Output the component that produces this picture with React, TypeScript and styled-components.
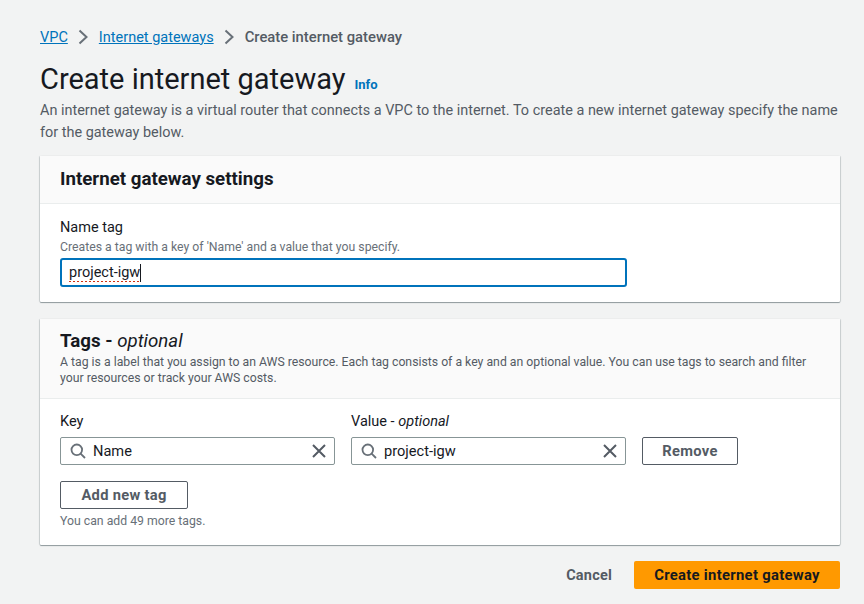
import React from 'react';
import styled, { createGlobalStyle } from 'styled-components';

const GlobalStyle = createGlobalStyle`
  html, body {
    margin: 0;
    padding: 0;
    background: #f2f3f3;
    font-family: Roboto, "Noto Sans", "Liberation Sans", sans-serif;
    color: #16191f;
  }
`;

const Page = styled.div`
  width: 864px;
  height: 604px;
  box-sizing: border-box;
  padding: 27px 24px 0 40px;
  overflow: hidden;
`;

const Breadcrumbs = styled.nav`
  display: flex;
  align-items: center;
  height: 20px;
  font-size: 14.5px;
`;

const Crumb = styled.a`
  color: #0073bb;
  text-decoration: underline;
`;

const CurrentCrumb = styled.span`
  color: #545b64;
  font-size: 14.8px;
  font-weight: 500;
`;

const Chevron = styled.svg`
  width: 12px;
  height: 16px;
  margin: 0 9.5px;
  fill: none;
  stroke: #687078;
  stroke-width: 2;
`;

const TitleRow = styled.div`
  display: flex;
  align-items: baseline;
  margin-top: 11px;
  height: 42px;
`;

const Title = styled.h1`
  margin: 0;
  font-size: 29px;
  line-height: 42px;
  font-weight: 400;
`;

const InfoLink = styled.a`
  margin-left: 9px;
  font-size: 13px;
  font-weight: 700;
  color: #0073bb;
`;

const Intro = styled.p`
  margin: 0;
  font-size: 14.45px;
  line-height: 22px;
  white-space: nowrap;
  color: #545b64;
`;

const Card = styled.section`
  margin-top: ${(p: { $top: number }) => p.$top}px;
  background: #fff;
  box-shadow: 0 1px 1px 0 rgba(0, 28, 36, 0.4), 1px 0 1px 0 rgba(0, 28, 36, 0.14), -1px 0 1px 0 rgba(0, 28, 36, 0.14);
  border-radius: 1px;
`;

const CardHeader = styled.header<{ $height: number; $top: number }>`
  box-sizing: border-box;
  height: ${(p) => p.$height}px;
  padding: ${(p) => p.$top}px 20px 0;
  background: #fafafa;
  border-bottom: 1px solid #eaeded;
`;

const CardTitle = styled.h2`
  margin: 0;
  font-size: 18.7px;
  line-height: 26px;
  font-weight: 700;

  em {
    font-weight: 400;
  }
`;

const Hint = styled.p`
  margin: 0;
  font-size: 12.25px;
  line-height: 16px;
  white-space: nowrap;
  color: #687078;
`;

const HeaderHint = styled(Hint)`
  color: #545b64;
`;

const CardBody = styled.div<{ $padding: string }>`
  padding: ${(p) => p.$padding};
`;

const Label = styled.div`
  font-size: 14.5px;
  line-height: 20px;
  color: #16191f;
`;

const NameHint = styled(Hint)`
  margin-top: 1px;
`;

const NameInput = styled.div`
  box-sizing: border-box;
  width: 567px;
  height: 29px;
  margin-top: 3px;
  padding-left: 7px;
  border: 2px solid #0073bb;
  border-radius: 3px;
  background: #fff;
  font-size: 14.5px;
  line-height: 25px;
`;

const Misspelled = styled.span`
  padding-bottom: 1px;
  background: repeating-linear-gradient(90deg, #d13212 0 2px, transparent 2px 4px) bottom / 100% 1px no-repeat;
  border-right: 1px solid #16191f;
`;

const TagRow = styled.div`
  display: flex;
  align-items: flex-end;
  gap: 16px;
`;

const TagColumn = styled.div`
  width: 275px;
`;

const SearchField = styled.div`
  box-sizing: border-box;
  display: flex;
  align-items: center;
  height: 28px;
  margin-top: 5px;
  padding: 0 7px 0 9px;
  border: 1px solid #879596;
  border-radius: 2px;
  background: #fff;
  font-size: 14.6px;
  color: #16191f;

  span {
    flex: 1;
    margin-left: 7px;
  }
`;

const FieldIcon = styled.svg`
  width: 16px;
  height: 16px;
  fill: none;
  stroke: ${(p: { $color: string }) => p.$color};
  stroke-width: 1.8;
`;

const ClearIcon = styled(FieldIcon)`
  stroke-width: 2;
`;

const OutlineButton = styled.button<{ $width: number }>`
  box-sizing: border-box;
  width: ${(p) => p.$width}px;
  height: 28px;
  padding: 0;
  border: 1px solid #545b64;
  border-radius: 2px;
  background: #fff;
  font-family: inherit;
  font-size: 14.7px;
  font-weight: 700;
  letter-spacing: 0.3px;
  color: #545b64;
`;

const AddRow = styled.div`
  margin-top: 16px;
  margin-bottom: 4px;
`;

const Footer = styled.footer`
  display: flex;
  justify-content: flex-end;
  align-items: center;
  gap: 22px;
  margin-top: 16px;
`;

const CancelButton = styled.button`
  padding: 0;
  border: none;
  background: none;
  font-family: inherit;
  font-size: 14.5px;
  font-weight: 700;
  letter-spacing: 0.2px;
  color: #545b64;
`;

const PrimaryButton = styled.button`
  width: 206px;
  height: 28px;
  padding: 0;
  border: none;
  border-radius: 2px;
  background: #ff9900;
  font-family: inherit;
  font-size: 14.8px;
  font-weight: 700;
  letter-spacing: 0.3px;
  color: #16191f;
`;

const ChevronIcon = () => (
  <Chevron viewBox="0 0 12 16">
    <path d="M2.5 1.5 9.5 8l-7 6.5" />
  </Chevron>
);

const SearchIcon = () => (
  <FieldIcon $color="#687078" viewBox="0 0 16 16">
    <circle cx="6.8" cy="6.8" r="5.3" />
    <path d="m10.6 10.6 4.4 4.4" />
  </FieldIcon>
);

const CloseIcon = () => (
  <ClearIcon $color="#545b64" viewBox="0 0 16 16">
    <path d="m2 2 12 12M14 2 2 14" />
  </ClearIcon>
);

const App: React.FC = () => {
  return (
    <Page>
      <GlobalStyle />
      <Breadcrumbs>
        <Crumb>VPC</Crumb>
        <ChevronIcon />
        <Crumb>Internet gateways</Crumb>
        <ChevronIcon />
        <CurrentCrumb>Create internet gateway</CurrentCrumb>
      </Breadcrumbs>
      <TitleRow>
        <Title>Create internet gateway</Title>
        <InfoLink>Info</InfoLink>
      </TitleRow>
      <Intro>
        An internet gateway is a virtual router that connects a VPC to the internet. To create a new internet gateway specify the name
        <br />
        for the gateway below.
      </Intro>

      <Card $top={12}>
        <CardHeader $height={48} $top={10}>
          <CardTitle>Internet gateway settings</CardTitle>
        </CardHeader>
        <CardBody $padding="14px 20px 15px">
          <Label>Name tag</Label>
          <NameHint>Creates a tag with a key of 'Name' and a value that you specify.</NameHint>
          <NameInput>
            <Misspelled>project-igw</Misspelled>
          </NameInput>
        </CardBody>
      </Card>

      <Card $top={17}>
        <CardHeader $height={80} $top={9}>
          <CardTitle>
            Tags - <em>optional</em>
          </CardTitle>
          <HeaderHint>
            A tag is a label that you assign to an AWS resource. Each tag consists of a key and an optional value. You can use tags to search and filter
            <br />
            your resources or track your AWS costs.
          </HeaderHint>
        </CardHeader>
        <CardBody $padding="13px 20px 16px">
          <TagRow>
            <TagColumn>
              <Label>Key</Label>
              <SearchField>
                <SearchIcon />
                <span>Name</span>
                <CloseIcon />
              </SearchField>
            </TagColumn>
            <TagColumn>
              <Label>
                Value - <em>optional</em>
              </Label>
              <SearchField>
                <SearchIcon />
                <span>project-igw</span>
                <CloseIcon />
              </SearchField>
            </TagColumn>
            <OutlineButton $width={96}>Remove</OutlineButton>
          </TagRow>
          <AddRow>
            <OutlineButton $width={128}>Add new tag</OutlineButton>
          </AddRow>
          <Hint>You can add 49 more tags.</Hint>
        </CardBody>
      </Card>

      <Footer>
        <CancelButton>Cancel</CancelButton>
        <PrimaryButton>Create internet gateway</PrimaryButton>
      </Footer>
    </Page>
  );
};

export default App;
